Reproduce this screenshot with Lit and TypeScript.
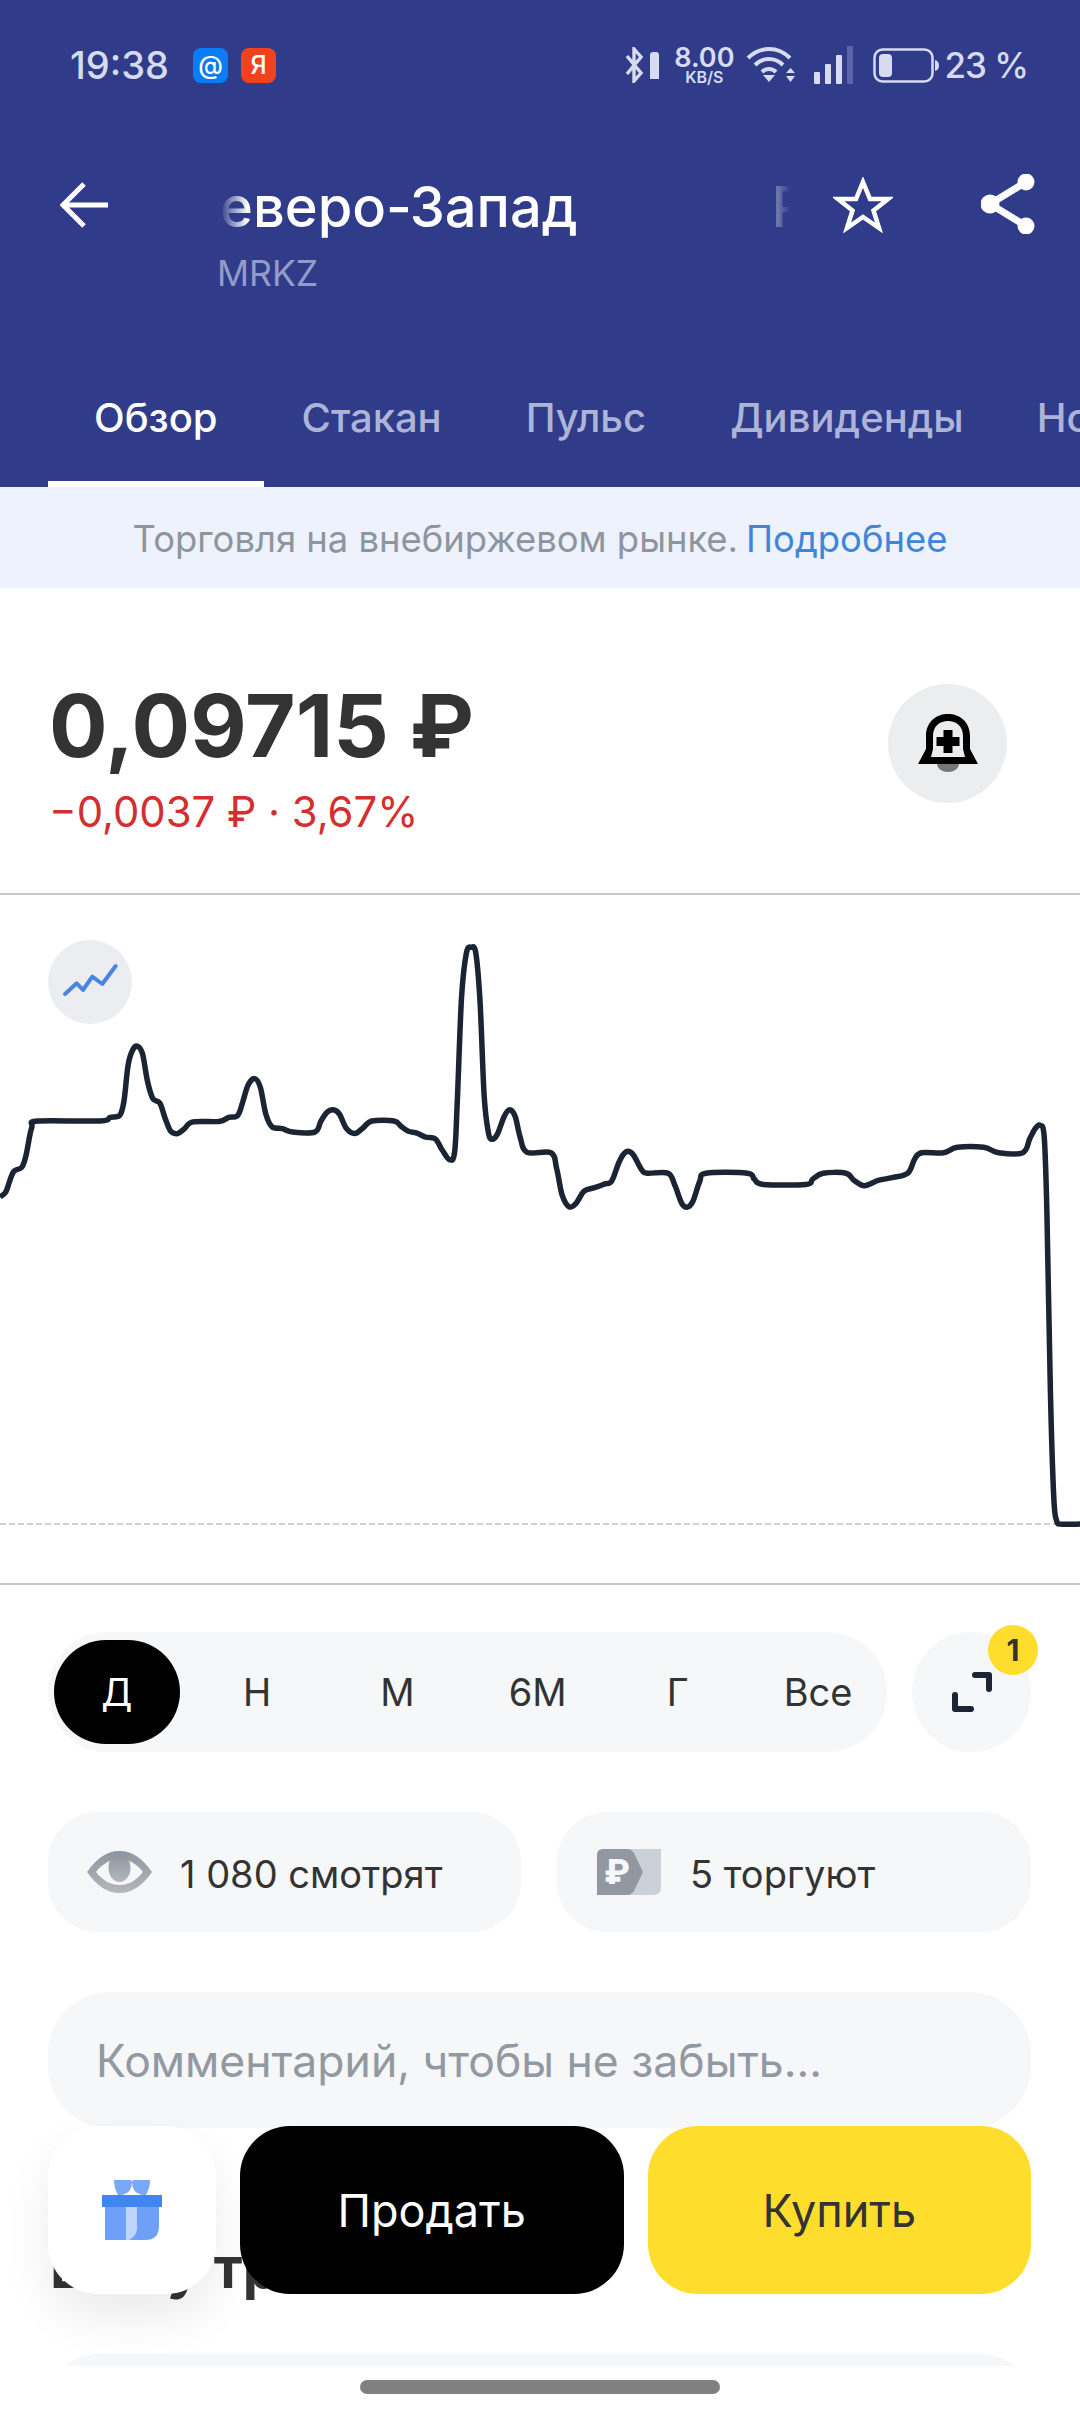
/**
 * Stock details screen: header, price, chart, period switcher, action bar
 */

import { LitElement, html, css, svg } from 'lit';
import { customElement } from 'lit/decorators.js';

const PERIODS = ['Д', 'Н', 'М', '6М', 'Г', 'Все'];
const TABS = ['Обзор', 'Стакан', 'Пульс', 'Дивиденды', 'Но'];

// traced from the reference, x/y in 1568x1568 space stretched over 1080x700
const CHART: [number, number][] = [
  [0, 665], [8, 655], [14, 630], [20, 608], [32, 598], [38, 570], [46, 510], [55, 495], [145, 495], [160, 487],
  [174, 482], [180, 450], [186, 370], [193, 335], [200, 328], [207, 345], [214, 405], [222, 445], [232, 455],
  [240, 490], [248, 518], [258, 523], [268, 512], [280, 497], [318, 496], [332, 487], [345, 483], [352, 455],
  [360, 415], [370, 400], [378, 420], [386, 480], [395, 508], [410, 512], [425, 520], [457, 520], [466, 495],
  [475, 475], [484, 470], [493, 480], [503, 512], [515, 523], [526, 512], [540, 495], [572, 495], [583, 508],
  [593, 518], [605, 522], [618, 531], [632, 535], [642, 560], [653, 582], [660, 565], [664, 450], [670, 220],
  [677, 120], [684, 106], [691, 120], [697, 230], [703, 440], [709, 520], [714, 536], [722, 525], [732, 485],
  [740, 470], [748, 485], [755, 530], [765, 565], [800, 566], [808, 600], [816, 660], [826, 687], [836, 680],
  [848, 652], [862, 645], [878, 636], [888, 630], [898, 590], [905, 570], [912, 563], [920, 572], [932, 605],
  [940, 612], [970, 612], [980, 640], [990, 680], [998, 688], [1006, 675], [1016, 630], [1025, 612], [1085, 612],
  [1095, 625], [1108, 637], [1170, 637], [1180, 625], [1195, 612], [1228, 612], [1240, 628], [1255, 640],
  [1275, 628], [1295, 622], [1318, 612], [1328, 580], [1338, 566], [1370, 566], [1390, 554], [1428, 554],
  [1450, 566], [1485, 566], [1495, 535], [1503, 512], [1510, 505], [1516, 530], [1520, 700], [1525, 1100],
  [1530, 1340], [1534, 1390], [1540, 1398], [1568, 1398],
];

function chartPath(): string {
  const pts = CHART.map(([x, y]) => [(x * 1080) / 1568, (y * 700) / 1568 + 5]);
  let d = `M${pts[0][0].toFixed(1)} ${pts[0][1].toFixed(1)}`;
  for (let i = 0; i < pts.length - 1; i++) {
    const p0 = pts[Math.max(i - 1, 0)];
    const p1 = pts[i];
    const p2 = pts[i + 1];
    const p3 = pts[Math.min(i + 2, pts.length - 1)];
    const c1x = p1[0] + (p2[0] - p0[0]) / 6;
    const c1y = p1[1] + (p2[1] - p0[1]) / 6;
    const c2x = p2[0] - (p3[0] - p1[0]) / 6;
    const c2y = p2[1] - (p3[1] - p1[1]) / 6;
    d += `C${c1x.toFixed(1)} ${c1y.toFixed(1)} ${c2x.toFixed(1)} ${c2y.toFixed(1)} ${p2[0].toFixed(1)} ${p2[1].toFixed(1)}`;
  }
  return d;
}

@customElement('app-root')
export class AppRoot extends LitElement {
  static override styles = css`
    :host {
      display: block;
      position: relative;
      width: 1080px;
      height: 2414px;
      overflow: hidden;
      background: #fff;
      font-family: 'Inter', 'Noto Sans', sans-serif;
      color: #333;
    }

    svg {
      display: block;
      flex: none;
    }

    .header {
      background: #303c89;
      height: 487px;
      color: #fff;
    }

    .status {
      height: 130px;
      display: flex;
      align-items: center;
      padding: 0 52px 0 70px;
      color: #d7dbf0;
    }

    .time {
      font-size: 38px;
      font-weight: 500;
      width: 123px;
    }

    .app-badge {
      width: 35px;
      height: 35px;
      border-radius: 8px;
      display: flex;
      align-items: center;
      justify-content: center;
      color: #fff;
      font-size: 25px;
      font-weight: 500;
      margin-right: 13px;
    }

    .mail {
      background: #0a7cf5;
    }

    .ya {
      background: #f0421c;
    }

    .status-right {
      margin-left: auto;
      display: flex;
      align-items: center;
    }

    .speed {
      width: 58px;
      margin: 0 13px 0 13px;
      display: flex;
      flex-direction: column;
      align-items: center;
      font-weight: 600;
    }

    .speed-top {
      font-size: 27px;
      line-height: 24px;
    }

    .speed-unit {
      font-size: 16px;
      line-height: 15px;
    }

    .percent {
      font-size: 35px;
      font-weight: 500;
      letter-spacing: -1px;
      margin-left: 5px;
    }

    .toolbar {
      height: 217px;
      padding: 45px 45px 0 60px;
      box-sizing: border-box;
      display: flex;
      align-items: flex-start;
    }

    .back {
      margin-right: 112px;
      margin-top: 7px;
    }

    .name-col {
      width: 570px;
      margin-right: 43px;
    }

    .title {
      height: 64px;
      display: flex;
      gap: 194px;
      overflow: hidden;
      white-space: nowrap;
      font-size: 56px;
      font-weight: 500;
      line-height: 64px;
      -webkit-mask-image: linear-gradient(to right, transparent 0, #000 28px, #000 calc(100% - 24px), rgba(0, 0, 0, 0.45) calc(100% - 18px), transparent 100%);
      mask-image: linear-gradient(to right, transparent 0, #000 28px, #000 calc(100% - 24px), rgba(0, 0, 0, 0.45) calc(100% - 18px), transparent 100%);
    }

    .ticker {
      margin: 15px 0 0 -3px;
      font-size: 35.500px;
      line-height: 40px;
      color: #939cc8;
    }

    .star {
      margin-right: 88px;
      margin-top: 2px;
    }

    .tabs {
      height: 140px;
      display: flex;
      padding-left: 48px;
      white-space: nowrap;
      overflow: hidden;
    }

    .tab {
      padding: 0 46px;
      margin-right: -8px;
      display: flex;
      align-items: center;
      font-size: 40px;
      font-weight: 500;
      color: #adb4d8;
      position: relative;
    }

    .tab:last-child {
      margin-left: -11px;
    }

    .tab.active {
      color: #fff;
    }

    .tab.active::after {
      content: '';
      position: absolute;
      left: 0;
      right: 0;
      bottom: 0;
      height: 6px;
      background: #fff;
    }

    .notice {
      height: 101px;
      box-sizing: border-box;
      padding-top: 3px;
      background: #edf2fc;
      display: flex;
      align-items: center;
      justify-content: center;
      font-size: 36.400px;
      color: #8f959e;
    }

    .notice span {
      color: #3f86d8;
      margin-left: 8px;
    }

    .price-block {
      box-sizing: border-box;
      display: flex;
      justify-content: space-between;
      padding: 88px 73px 0 49px;
      border-bottom: 2px solid #c9c9c9;
      height: 307px;
    }

    .price {
      font-size: 87px;
      font-weight: 700;
      line-height: 100px;
      color: #333;
    }

    .delta {
      margin-top: 8px;
      font-size: 41.800px;
      line-height: 56px;
      color: #d32f2f;
    }

    .bell {
      width: 119px;
      height: 119px;
      margin-top: 8px;
      border-radius: 50%;
      background: #ebedee;
      display: flex;
      align-items: center;
      justify-content: center;
    }

    .chart {
      position: relative;
      height: 688px;
      border-bottom: 2px solid #c9c9c9;
    }

    .chart-btn {
      position: absolute;
      left: 48px;
      top: 45px;
      width: 84px;
      height: 84px;
      border-radius: 50%;
      background: #ebedf0;
    }

    .controls {
      padding: 47px 49px 0 48px;
    }

    .period-row {
      display: flex;
      justify-content: space-between;
    }

    .periods {
      width: 839px;
      height: 120px;
      box-sizing: border-box;
      padding: 8px 6px;
      border-radius: 60px;
      background: #f5f7f8;
      display: flex;
      gap: 14.4px;
    }

    .period {
      width: 126px;
      display: flex;
      align-items: center;
      justify-content: center;
      border-radius: 52px;
      font-size: 38px;
      color: #333;
    }

    .period.active {
      background: #000;
      color: #fff;
    }

    .expand {
      position: relative;
      width: 119px;
      height: 120px;
      border-radius: 50%;
      background: #f5f7f8;
      display: flex;
      align-items: center;
      justify-content: center;
    }

    .count {
      position: absolute;
      right: -7px;
      top: -7px;
      width: 50px;
      height: 50px;
      border-radius: 50%;
      background: #ffdd2d;
      display: flex;
      align-items: center;
      justify-content: center;
      font-size: 30px;
      font-weight: 700;
      color: #333;
    }

    .chips {
      margin-top: 60px;
      display: flex;
      gap: 36px;
    }

    .chip {
      flex: 1;
      height: 120px;
      border-radius: 50px;
      background: #f5f7f8;
      display: flex;
      align-items: center;
      font-size: 38px;
      color: #333;
    }

    .chip span {
      padding-top: 3px;
    }

    .chip.watch {
      padding-left: 39px;
      gap: 28px;
    }

    .chip.trade {
      padding-left: 40px;
      gap: 29px;
    }

    .comment {
      margin-top: 60px;
      height: 136px;
      box-sizing: border-box;
      padding: 2px 0 0 48px;
      border-radius: 62px;
      background: #f5f7f8;
      display: flex;
      align-items: center;
      font-size: 44.500px;
      color: #9299a2;
    }

    .heading {
      margin: 104px 0 0 2px;
      font-size: 56px;
      font-weight: 700;
      line-height: 72px;
      color: #333;
      white-space: nowrap;
    }

    .next-card {
      margin-top: 50px;
      height: 200px;
      border-radius: 50px;
      background: #f5f7f8;
    }

    .actions {
      position: absolute;
      left: 48px;
      right: 49px;
      top: 2126px;
      height: 168px;
      display: flex;
      gap: 24px;
    }

    .action {
      border-radius: 50px;
      display: flex;
      align-items: center;
      justify-content: center;
      font-size: 45px;
    }

    .gift {
      width: 168px;
      background: #fff;
      box-shadow: 0 24px 48px rgba(0, 0, 0, 0.08);
    }

    .sell {
      flex: 1;
      background: #000;
      color: #fff;
    }

    .buy {
      flex: 1;
      background: #ffdd2d;
      color: #333;
    }

    .home {
      position: absolute;
      left: 0;
      right: 0;
      bottom: 0;
      height: 48px;
      background: #fff;
      display: flex;
      justify-content: center;
      padding-top: 14px;
      box-sizing: border-box;
    }

    .home-bar {
      width: 360px;
      height: 14px;
      border-radius: 7px;
      background: #808080;
    }
  `;

  private renderStatus() {
    return html`
      <div class="status">
        <span class="time">19:38</span>
        <span class="app-badge mail">@</span>
        <span class="app-badge ya">Я</span>
        <div class="status-right">
          <svg width="36" height="36" viewBox="0 0 36 36" fill="none">
            <path d="M1 9l14 17-7 8V2l7 8L1 27" stroke="#d7dbf0" stroke-width="3.4" />
            <path d="M24 8q0-3 3-3h3q3 0 3 3v24h-9z" fill="#d7dbf0" />
          </svg>
          <div class="speed">
            <span class="speed-top">8.00</span>
            <span class="speed-unit">KB/S</span>
          </div>
          <svg width="50" height="36" viewBox="0 0 50 36" fill="none" stroke="#d7dbf0" stroke-width="4">
            <path d="M2 11C14 -1 32 -1 44 11" />
            <path d="M9 18C17 10 29 10 37 18" />
            <path d="M16 25C20 21 26 21 30 25" />
            <path d="M17 28l6 7 6-7z" fill="#d7dbf0" stroke="none" />
            <path d="M40 26h9l-4.500-5zM40 29h9l-4.500 6z" fill="#d7dbf0" stroke="none" />
          </svg>
          <svg width="40" height="38" viewBox="0 0 40 38" style="margin-left: 18px">
            <rect x="0" y="26" width="6" height="12" rx="1" fill="#d7dbf0" />
            <rect x="11" y="18" width="6" height="20" rx="1" fill="#d7dbf0" />
            <rect x="22" y="9" width="6" height="29" rx="1" fill="#d7dbf0" />
            <rect x="33" y="0" width="6" height="38" rx="1" fill="#5a66a8" />
          </svg>
          <svg width="66" height="35" viewBox="0 0 66 35" fill="none" style="margin-left: 19px">
            <rect x="1.500" y="1.500" width="58" height="32" rx="8" stroke="#d7dbf0" stroke-width="2.500" />
            <rect x="6" y="6" width="13" height="23" rx="4" fill="#d7dbf0" />
            <path d="M62 12q4 1 4 5.500t-4 5.500z" fill="#d7dbf0" />
          </svg>
          <span class="percent">23 %</span>
        </div>
      </div>
    `;
  }

  private renderToolbar() {
    return html`
      <div class="toolbar">
        <svg class="back" width="48" height="46" viewBox="0 0 48 46" fill="none" stroke="#fff" stroke-width="5">
          <path d="M48 23H4M24 2L3 23l21 21" />
        </svg>
        <div class="name-col">
          <div class="title"><span>еверо-Запад</span><span>Р</span></div>
          <div class="ticker">MRKZ</div>
        </div>
        <svg class="star" width="60" height="56" viewBox="0 0 60 56" fill="none" stroke="#fff" stroke-width="4.500">
          <path d="M30 5l7 17h18l-14.500 11.500L46 51 30 40 14 51l5.500-17.500L5 22h18z" />
        </svg>
        <svg width="54" height="60" viewBox="0 0 54 60" fill="#fff" stroke="#fff" stroke-width="7" style="margin-top: -1px">
          <path d="M45 8L9 30l36 22" fill="none" />
          <circle cx="45" cy="8" r="5" />
          <circle cx="9" cy="30" r="6" />
          <circle cx="45" cy="52" r="5" />
        </svg>
      </div>
    `;
  }

  private renderBell() {
    return html`
      <svg width="60" height="60" viewBox="0 0 60 60">
        <path d="M19 50h22a11 8 0 0 1-22 0z" fill="#777" />
        <path
          fill-rule="evenodd"
          d="M0 50L8 35V22C8 8 18 0 30 0s22 8 22 22V35l8 15zM13 43H47L45 35V22C45 12 38 7 30 7S15 12 15 22V35z"
          fill="#000"
        />
        <path d="M25.500 16h9v7h7v9h-7v7h-9v-7h-7v-9h7z" fill="#000" />
      </svg>
    `;
  }

  private renderChart() {
    return html`
      <div class="chart">
        <svg width="1080" height="688" viewBox="0 0 1080 688" fill="none">
          ${svg`<path d="M0 629H1080" stroke="#cfcfcf" stroke-width="2" stroke-dasharray="6 3" />`}
          ${svg`<path d=${chartPath()} stroke="#1a2433" stroke-width="5.500" stroke-linejoin="round" />`}
        </svg>
        <div class="chart-btn">
          <svg width="84" height="84" viewBox="0 0 84 84" fill="none">
            <path
              d="M17 54L28.700 43.300 35 50 44.300 36.700 54.300 44 67.700 26"
              stroke="#4a86e0"
              stroke-width="4"
              stroke-linecap="round"
              stroke-linejoin="round"
            />
          </svg>
        </div>
      </div>
    `;
  }

  private renderEye() {
    return html`
      <svg width="65" height="42" viewBox="0 0 65 42">
        <defs>
          <linearGradient id="eye" x1="0" y1="0" x2="0" y2="1">
            <stop offset="0" stop-color="#8f95a0" />
            <stop offset="1" stop-color="#b4b8bd" />
          </linearGradient>
        </defs>
        <path d="M0 21C10 7 20 0 32.500 0S55 7 65 21C55 35 45 42 32.500 42S10 35 0 21z" fill="url(#eye)" />
        <path d="M9 21C16 12 24 8 32.500 8S49 12 56 21C49 30 41 34 32.500 34S16 30 9 21z" fill="#f5f7f8" />
        <ellipse cx="32.500" cy="17" rx="11" ry="14" fill="url(#eye)" />
      </svg>
    `;
  }

  private renderRubleCard() {
    return html`
      <svg width="64" height="46" viewBox="0 0 64 46">
        <path d="M28 0H64V38Q64 46 56 46H28z" fill="#ccd1d7" />
        <path d="M6 0H30Q34 0 37 4L46 23 37 42Q34 46 30 46H0V6Q0 0 6 0z" fill="#9297a1" />
        <text x="20" y="35" text-anchor="middle" font-family="Inter" font-size="34" font-weight="800" fill="#f5f7f8">₽</text>
      </svg>
    `;
  }

  private renderGift() {
    return html`
      <svg width="60" height="60" viewBox="0 0 60 60">
        <path d="M12 0H28Q30 0 30 2 30 13 20 15H16Q12 8 12 0zM48 0H32Q30 0 30 2 30 13 40 15H44Q48 8 48 0z" fill="#7aa8f8" />
        <path d="M3 27H57V46Q57 60 43 60H3z" fill="#6ea0f8" />
        <path d="M24 27H35V48Q35 56 27 60H24z" fill="#c0d5fb" />
        <rect x="0" y="15" width="60" height="12" fill="#3f86f0" />
      </svg>
    `;
  }

  override render() {
    return html`
      <div class="header">
        ${this.renderStatus()} ${this.renderToolbar()}
        <div class="tabs">
          ${TABS.map((t, i) => html`<div class="tab ${i === 0 ? 'active' : ''}">${t}</div>`)}
        </div>
      </div>
      <div class="notice">Торговля на внебиржевом рынке.<span>Подробнее</span></div>
      <div class="price-block">
        <div>
          <div class="price">0,09715 ₽</div>
          <div class="delta">−0,0037 ₽ · 3,67%</div>
        </div>
        <div class="bell">${this.renderBell()}</div>
      </div>
      ${this.renderChart()}
      <div class="controls">
        <div class="period-row">
          <div class="periods">
            ${PERIODS.map((p, i) => html`<div class="period ${i === 0 ? 'active' : ''}">${p}</div>`)}
          </div>
          <div class="expand">
            <svg width="40" height="40" viewBox="0 0 40 40" fill="none" stroke="#1a2433" stroke-width="6" stroke-linecap="round" stroke-linejoin="round">
              <path d="M23 3H37V17M3 23V37H19" />
            </svg>
            <div class="count">1</div>
          </div>
        </div>
        <div class="chips">
          <div class="chip watch">${this.renderEye()}<span>1 080 смотрят</span></div>
          <div class="chip trade">${this.renderRubleCard()}<span>5 торгуют</span></div>
        </div>
        <div class="comment">Комментарий, чтобы не забыть...</div>
        <div class="heading">Вашу тр</div>
        <div class="next-card"></div>
      </div>
      <div class="actions">
        <div class="action gift">${this.renderGift()}</div>
        <div class="action sell">Продать</div>
        <div class="action buy">Купить</div>
      </div>
      <div class="home"><div class="home-bar"></div></div>
    `;
  }
}

declare global {
  interface HTMLElementTagNameMap {
    'app-root': AppRoot;
  }
}
